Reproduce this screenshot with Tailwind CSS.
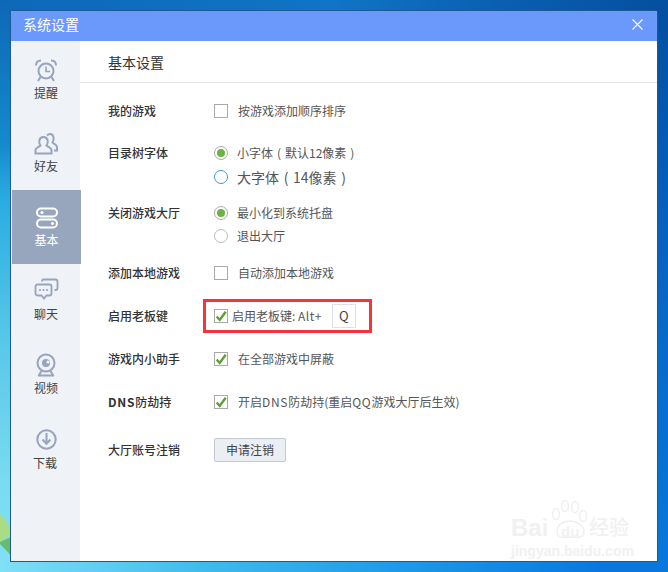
<!DOCTYPE html>
<html lang="zh-CN">
<head>
  <meta charset="UTF-8" />
  <meta name="viewport" content="width=device-width, initial-scale=1.0" />
  <title>系统设置</title>
  <script src="https://cdn.jsdelivr.net/npm/@tailwindcss/browser@4"></script>
</head>
<body class="relative w-[668px] h-[572px] overflow-hidden bg-[#0a6cc8] font-['Noto_Sans_CJK_SC','Noto_Sans',sans-serif]">

  <!-- desktop wallpaper, seen round the window -->
  <div class="absolute left-0 top-0 w-[668px] h-[12px] bg-[linear-gradient(90deg,#0d68b8_0%,#1174c6_50%,#0a5fb0_75%,#044fa0_100%)]"></div>
  <div class="absolute right-0 top-0 w-[12px] h-[572px] bg-[linear-gradient(180deg,#044fa0_0%,#0868c8_55%,#0878dc_100%)]"></div>
  <div class="absolute left-0 top-0 w-[12px] h-[572px] bg-[linear-gradient(180deg,#0d68b8_0%,#1489cf_25%,#2bace0_35%,#58c8ea_60%,#7adcf0_85%,#80e0f5_100%)]"></div>
  <div class="absolute left-0 bottom-0 w-[668px] h-[12px] bg-[linear-gradient(90deg,#80e0f5_0%,#3fbcec_30%,#1c9ae8_60%,#0878e0_90%,#0878dc_100%)]"></div>
  <svg class="absolute left-0 top-[510px] opacity-80" width="11" height="50" viewBox="0 0 11 50">
    <path d="M0 4 C5 8 9 14 11 24 L0 32 Z" fill="#b4dc6a" />
    <path d="M9 0 L11 8 L11 16 C10 10 9 6 9 0 Z" fill="#c4e07a" />
    <path d="M0 32 L11 27 L11 46 C8 42 4 38 0 34 Z" fill="#5fb64a" />
  </svg>

  <!-- window -->
  <div class="absolute left-[11px] top-[11px] w-[646px] h-[550px] flex flex-col bg-white rounded-t-[2px] shadow-[0_0_0_1px_#1d5a8f]">
    <div class="h-[30px] shrink-0 flex items-center justify-between pl-3 pr-[14px] pb-[4px] bg-[#6a98fb] rounded-t-[2px]">
      <span class="text-sm text-white">系统设置</span>
      <svg width="11" height="11" viewBox="0 0 11 11" fill="none" stroke="#fff" stroke-width="1.1"><path d="M0.5 0.5 L10.5 10.5 M10.5 0.5 L0.5 10.5" /></svg>
    </div>

    <div class="flex flex-1 min-h-0">
      <!-- side nav -->
      <nav class="w-[69px] shrink-0 bg-[#eff2f6] pt-[1px] pl-[1px] text-xs text-[#444]">
        <div class="h-[74px] flex flex-col items-center pt-[17px]">
          <svg width="24" height="23" viewBox="0 0 24 23" fill="none" stroke="#97a4bc" stroke-width="2"><circle cx="12" cy="12" r="7.5" /><path d="M12 7.5 V12.5 H16" stroke-width="1.6" /><path d="M2 6.5 C2 3 4 1.5 7 1.5 M22 6.5 C22 3 20 1.5 17 1.5" /><path d="M6.5 18 L4 22 M17.5 18 L20 22" /></svg>
          <span class="mt-[3px] leading-4">提醒</span>
        </div>
        <div class="h-[74px] flex flex-col items-center pt-[17px]">
          <svg width="24" height="22" viewBox="0 0 24 22" fill="none" stroke="#97a4bc" stroke-width="2"><path d="M1.5 20.5 V17 C1.5 14.5 5 14 6.5 12.5 C4.5 10 4.5 4 9.5 4 C14.5 4 14.5 10 12.5 12.5 C14 14 17.5 14.5 17.5 17 V20.5 Z" /><path d="M13 2.5 C14 1.5 15 1 16 1 C20 1 20.5 6.5 18.5 9.5 C19.5 11 23 11.5 23 14 V17.5 H20" /></svg>
          <span class="mt-[3px] leading-4">好友</span>
        </div>
        <div class="h-[74px] w-[69px] relative z-10 flex flex-col items-center pt-[17px] bg-[#98a6bd] text-white">
          <svg width="24" height="22" viewBox="0 0 24 22" fill="none" stroke="#fff" stroke-width="2"><rect x="2" y="1.5" width="20" height="8" rx="4" /><rect x="2" y="12.5" width="20" height="8" rx="4" /><circle cx="7" cy="5.5" r="1.6" fill="#fff" stroke="none" /><circle cx="17.5" cy="16.5" r="1.6" fill="#fff" stroke="none" /></svg>
          <span class="mt-[3px] leading-4">基本</span>
        </div>
        <div class="h-[74px] flex flex-col items-center pt-[14px]">
          <svg width="25" height="22" viewBox="0 0 25 22" fill="none" stroke="#97a4bc" stroke-width="1.8"><path d="M3.5 6.5 H15.5 C16.8 6.5 17.5 7.2 17.5 8.5 V15.5 C17.5 16.8 16.8 17.5 15.5 17.5 H12.5 L10 20.5 L7.5 17.5 H3.5 C2.2 17.5 1.5 16.8 1.5 15.5 V8.5 C1.5 7.2 2.2 6.5 3.5 6.5 Z" /><path d="M8 3.5 V3 C8 2 8.7 1.5 9.5 1.5 H21.5 C22.8 1.5 23.5 2.2 23.5 3.5 V10 C23.5 11.3 22.8 12 21.5 12 H20.5" /><circle cx="6" cy="12" r="1.1" fill="#97a4bc" stroke="none" /><circle cx="9.5" cy="12" r="1.1" fill="#97a4bc" stroke="none" /><circle cx="13" cy="12" r="1.1" fill="#97a4bc" stroke="none" /></svg>
          <span class="mt-[6px] leading-4">聊天</span>
        </div>
        <div class="h-[74px] flex flex-col items-center pt-[15px]">
          <svg width="22" height="24" viewBox="0 0 22 24" fill="none" stroke="#97a4bc" stroke-width="2"><circle cx="11" cy="10" r="8.5" /><circle cx="11" cy="10" r="4" fill="#97a4bc" stroke="none" /><circle cx="13" cy="9" r="1.6" fill="#eff2f6" stroke="none" /><path d="M6.5 18 L3.5 23 M15.5 18 L18.5 23 M3 22.5 H19" /></svg>
          <span class="mt-[3px] leading-4">视频</span>
        </div>
        <div class="h-[74px] flex flex-col items-center pt-[17px]">
          <svg width="21" height="21" viewBox="0 0 21 21" fill="none" stroke="#97a4bc" stroke-width="2"><circle cx="10.5" cy="10.5" r="9.2" /><path d="M10.5 4 V14.5 M6.5 10.5 L10.5 14.8 L14.5 10.5" /></svg>
          <span class="mt-[5px] leading-4 -ml-[2px]">下载</span>
        </div>
      </nav>

      <!-- content -->
      <main class="flex-1 min-w-0">
        <div class="h-[42px] flex items-center pl-7 border-b border-[#e3e5e8] text-sm text-[#333]">基本设置</div>

        <div class="pl-7 pt-[18px] text-xs text-[#333]">
          <div class="flex items-center h-[20px] mb-[22px]">
            <span class="w-[106px] font-medium">我的游戏</span>
            <span class="w-[14px] h-[14px] border border-[#aaa] bg-white"></span>
            <span class="ml-[10px] text-[#555]">按游戏添加顺序排序</span>
          </div>

          <div class="flex mb-[12px]">
            <span class="w-[106px] font-medium leading-5">目录树字体</span>
            <div class="flex flex-col">
              <div class="flex items-center h-[20px]">
                <span class="w-[14px] h-[14px] rounded-full border border-[#aaa] flex items-center justify-center"><span class="w-2 h-2 rounded-full bg-[#6cb33f]"></span></span>
                <span class="ml-[9px] text-[#555]">小字体<span class="inline-block w-[12px] text-center">(</span>默认12像素<span class="inline-block w-[12px] text-center">)</span></span>
              </div>
              <div class="flex items-center h-[28px]">
                <span class="w-[14px] h-[14px] rounded-full border border-[#3f97e0]"></span>
                <span class="ml-[9px] text-[#555] text-sm">大字体<span class="inline-block w-[14px] text-center">(</span>14像素<span class="inline-block w-[14px] text-center">)</span></span>
              </div>
            </div>
          </div>

          <div class="flex mb-[17px]">
            <span class="w-[106px] font-medium leading-5">关闭游戏大厅</span>
            <div class="flex flex-col gap-[3px]">
              <div class="flex items-center h-[20px]">
                <span class="w-[14px] h-[14px] rounded-full border border-[#aaa] flex items-center justify-center"><span class="w-2 h-2 rounded-full bg-[#6cb33f]"></span></span>
                <span class="ml-[9px] text-[#555]">最小化到系统托盘</span>
              </div>
              <div class="flex items-center h-[20px]">
                <span class="w-[14px] h-[14px] rounded-full border border-[#bbb]"></span>
                <span class="ml-[9px] text-[#555]">退出大厅</span>
              </div>
            </div>
          </div>

          <div class="flex items-center h-[20px] mb-[23px]">
            <span class="w-[106px] font-medium">添加本地游戏</span>
            <span class="w-[14px] h-[14px] border border-[#aaa] bg-white"></span>
            <span class="ml-[10px] text-[#555]">自动添加本地游戏</span>
          </div>

          <div class="flex items-center h-[20px] mb-[23px]">
            <span class="w-[95px] font-medium">启用老板键</span>
            <div class="flex items-center h-[34px] w-[169px] pl-[8px] border-[3px] border-[#f7343a]">
              <span class="w-[14px] h-[14px] border border-[#aaa] flex items-center justify-center"><svg width="14" height="13" viewBox="0 0 14 13" fill="none" stroke="#5c9f30" stroke-width="2.8"><path d="M2 6.5 L5.5 10.5 L12.5 1" /></svg></span>
              <span class="ml-[4px] text-[#555] whitespace-nowrap">启用老板键: <span class="tracking-[0.5px]">Alt+</span></span>
              <span class="ml-[10px] w-[24px] h-[24px] border border-[#dde1ea] flex items-center justify-center text-[13px] text-[#444]">Q</span>
            </div>
          </div>

          <div class="flex items-center h-[20px] mb-[23px]">
            <span class="w-[106px] font-medium">游戏内小助手</span>
            <span class="w-[14px] h-[14px] border border-[#aaa] flex items-center justify-center"><svg width="14" height="13" viewBox="0 0 14 13" fill="none" stroke="#5c9f30" stroke-width="2.8"><path d="M2 6.5 L5.5 10.5 L12.5 1" /></svg></span>
            <span class="ml-[10px] text-[#555]">在全部游戏中屏蔽</span>
          </div>

          <div class="flex items-center h-[20px] mb-[26px]">
            <span class="w-[106px] font-medium"><span class="font-bold tracking-[0.7px]">DNS</span>防劫持</span>
            <span class="w-[14px] h-[14px] border border-[#aaa] flex items-center justify-center"><svg width="14" height="13" viewBox="0 0 14 13" fill="none" stroke="#5c9f30" stroke-width="2.8"><path d="M2 6.5 L5.5 10.5 L12.5 1" /></svg></span>
            <span class="ml-[10px] text-[#555]">开启<span class="tracking-[0.7px]">DNS</span>防劫持(重启<span class="tracking-[0.7px]">QQ</span>游戏大厅后生效)</span>
          </div>

          <div class="flex items-center h-[24px]">
            <span class="w-[106px] font-medium">大厅账号注销</span>
            <button class="w-[72px] h-[24px] rounded-[2px] border border-[#c3c9d2] bg-[#ebeef2] text-[#444] text-xs">申请注销</button>
          </div>
        </div>
      </main>
    </div>
  </div>

  <!-- watermark -->
  <div class="absolute left-[511px] top-[500px] w-[120px] h-[60px] text-[#f1f1f1]">
    <svg class="absolute left-[40px] top-0" width="38" height="39" viewBox="0 0 38 39" fill="none" stroke="#efefef" stroke-width="1.5">
      <ellipse cx="5" cy="14" rx="3.5" ry="5.5" /><ellipse cx="14" cy="6" rx="3.5" ry="5.5" /><ellipse cx="24" cy="7" rx="3.5" ry="5.5" /><ellipse cx="32" cy="16" rx="3.5" ry="5.5" />
      <path d="M6 32 C6 25 12 21 19 21 C26 21 33 26 33 32 C33 38 26 38 19 37 C12 38 6 38 6 32 Z" />
    </svg>
    <span class="absolute left-0 top-[14px] text-[24px] leading-7 font-['Liberation_Sans',sans-serif] font-bold">Bai</span>
    <span class="absolute left-[50px] top-[22px] text-[15px] leading-5 font-['Liberation_Sans',sans-serif] font-bold">du</span>
    <span class="absolute left-[78px] top-[15px] text-[20px] leading-6 font-medium">经验</span>
    <span class="absolute left-0 top-[41px] text-[14px] leading-5 font-['Liberation_Sans',sans-serif] font-bold whitespace-nowrap">jingyan.baidu.com</span>
  </div>
</body>
</html>
